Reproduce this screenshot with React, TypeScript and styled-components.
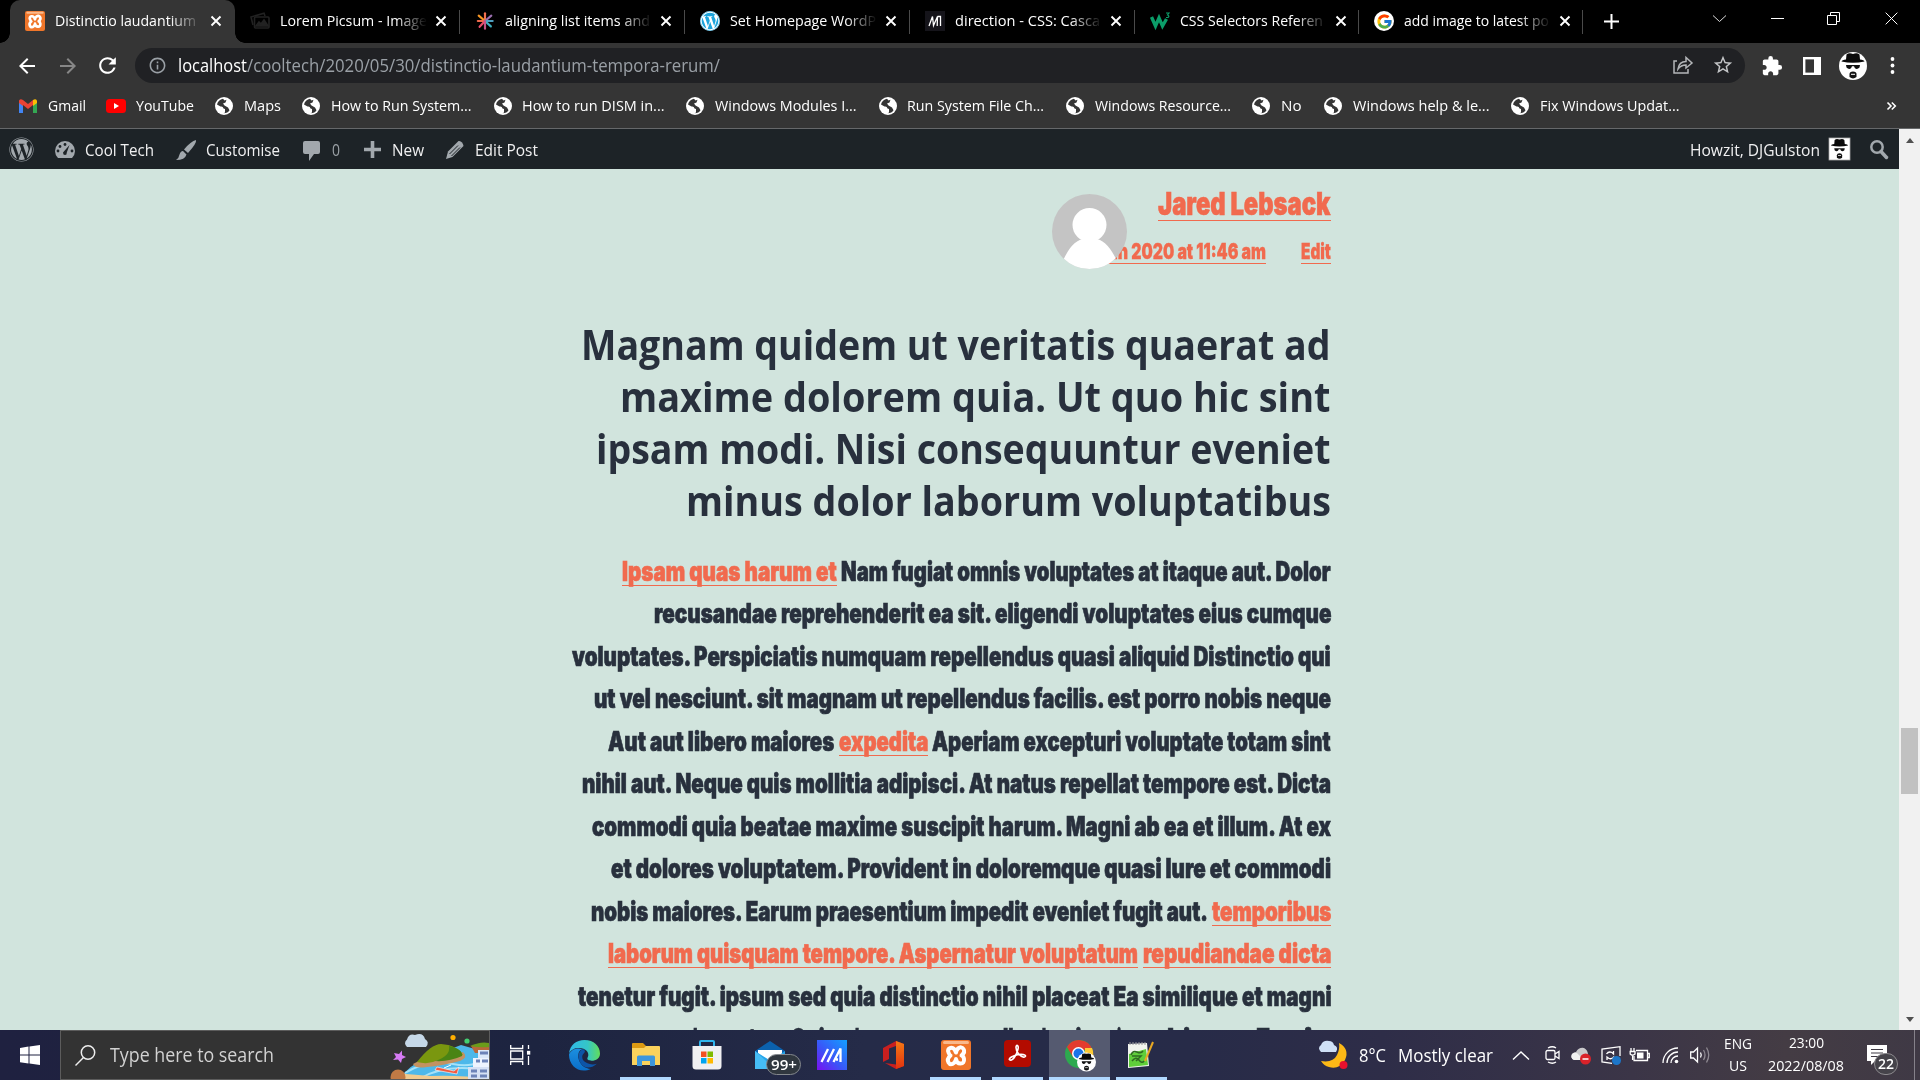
import React, { useLayoutEffect, useRef } from "react";
import styled, { createGlobalStyle, css } from "styled-components";
import { FaWordpress } from "react-icons/fa";
import { MdExtension, MdStarBorder, MdRefresh, MdArrowBack, MdArrowForward, MdInfoOutline } from "react-icons/md";
import { FcGoogle } from "react-icons/fc";

const UI = `"Segoe UI", "Open Sans", "Noto Sans", sans-serif`;
const DISPLAY = `Impact, Inter, "Liberation Sans", sans-serif`;
const ACCENT = "#f16a4e";

const Global = createGlobalStyle`
  * { box-sizing: border-box; }
  body { margin: 0; background: #000; overflow: hidden; font-family: ${UI}; }
  svg { display: block; flex: none; overflow: visible; }
`;

/* ---------- text that condenses to a given width ---------- */
const FitBox = styled.span<{ $w: number }>`
  display: block;
  flex: none;
  width: ${(p) => p.$w}px;
  white-space: pre;
`;
const FitInner = styled.span`
  display: inline-block;
  vertical-align: top;
  transform-origin: 0 50%;
  white-space: pre;
`;
function Fit({ w, children }: { w: number; children: React.ReactNode }) {
  const ref = useRef<HTMLSpanElement>(null);
  useLayoutEffect(() => {
    const el = ref.current;
    if (!el) return;
    el.style.transform = "none";
    const natural = el.getBoundingClientRect().width;
    if (natural > 0) el.style.transform = `scaleX(${w / natural})`;
  }, [w]);
  return (
    <FitBox $w={w}>
      <FitInner ref={ref}>{children}</FitInner>
    </FitBox>
  );
}

/* ---------- shell ---------- */
const Screen = styled.div`
  width: 1920px;
  height: 1080px;
  display: flex;
  flex-direction: column;
  overflow: hidden;
`;
const Item = styled.div<{ $ml?: number; $w?: number; $mt?: number; $pb?: number }>`
  flex: none;
  display: flex;
  align-items: center;
  justify-content: center;
  margin-left: ${(p) => p.$ml ?? 0}px;
  margin-top: ${(p) => p.$mt ?? 0}px;
  padding-bottom: ${(p) => p.$pb ?? 0}px;
  ${(p) => p.$w !== undefined && css`width: ${p.$w}px;`}
`;
const RoundIcon = styled.span`
  display: flex;
  align-items: center;
  justify-content: center;
  width: 20px;
  height: 20px;
  border-radius: 10px;
  background: #fff;
`;

/* ---------- tab strip ---------- */
const TabStrip = styled.div`
  height: 43px;
  flex: none;
  display: flex;
  background: #000;
  color: #fff;
  font-size: 14.5px;
  line-height: 20px;
`;
const Tab = styled.div<{ $active?: boolean; $sep?: boolean; $w: number }>`
  position: relative;
  width: ${(p) => p.$w}px;
  height: 43px;
  flex: none;
  display: flex;
  align-items: center;
  padding: 0 0 1px 15px;
  background: ${(p) => (p.$active ? "#353535" : "transparent")};
  border-radius: 10px 10px 0 0;
  ${(p) =>
    p.$active &&
    css`
      &::before, &::after {
        content: "";
        position: absolute;
        bottom: 0;
        width: 10px;
        height: 10px;
      }
      &::before { left: -10px; background: radial-gradient(circle at 0 0, transparent 9.5px, #353535 10px); }
      &::after { right: -10px; background: radial-gradient(circle at 100% 0, transparent 9.5px, #353535 10px); }
    `}
  ${(p) =>
    p.$sep &&
    css`
      &::after {
        content: "";
        position: absolute;
        right: 0;
        top: 10px;
        width: 1px;
        height: 24px;
        background: #4a4a4a;
      }
    `}
`;
const TabTitle = styled.div`
  width: 147px;
  margin-left: 10px;
  overflow: hidden;
  mask-image: linear-gradient(90deg, #000 115px, transparent 147px);
`;
const CloseX = styled.div`
  margin-left: 9px;
`;
const WindowButtons = styled.div`
  display: flex;
  height: 37px;
  align-items: center;
  margin-left: 81px;
  gap: 42px;
`;

/* ---------- toolbar ---------- */
const Toolbar = styled.div`
  height: 45px;
  flex: none;
  display: flex;
  align-items: center;
  background: #353535;
  color: #fff;
`;
const Omnibox = styled.div`
  width: 1610px;
  height: 35px;
  margin-left: 15px;
  border-radius: 18px;
  background: #202124;
  display: flex;
  align-items: center;
  padding-bottom: 1px;
  font-size: 17.5px;
  line-height: 24px;
  color: #9aa0a6;
`;
const Host = styled.div`
  color: #fff;
  margin-left: 12px;
`;

/* ---------- bookmarks ---------- */
const Bookmarks = styled.div`
  height: 41px;
  flex: none;
  display: flex;
  align-items: center;
  padding-bottom: 5px;
  background: #353535;
  border-bottom: 1px solid #66686a;
  color: #fff;
  font-size: 14.5px;
  line-height: 20px;
`;

/* ---------- page ---------- */
const Viewport = styled.div`
  height: 901px;
  flex: none;
  display: flex;
  overflow: hidden;
`;
const Page = styled.div`
  width: 1899px;
  height: 901px;
  background: #d1e4dd;
  overflow: hidden;
`;
const AdminBar = styled.div`
  height: 40px;
  display: flex;
  align-items: center;
  padding-top: 1px;
  background: #1d2327;
  color: #f0f0f1;
  font-size: 15.5px;
  line-height: 22px;
`;
const Dim = styled.div`
  color: #9ca2a7;
`;
const Grow = styled.div`
  flex: 1;
`;
const Article = styled.article`
  width: 760.5px;
  margin-left: 570px;
  color: #28303d;
`;
const AuthorRow = styled.header`
  height: 149px;
  display: flex;
  justify-content: flex-end;
  align-items: flex-start;
  font-family: ${DISPLAY};
  font-weight: 900;
  color: ${ACCENT};
`;
const AvatarCircle = styled.div`
  position: relative;
  z-index: 1;
  width: 75px;
  height: 75px;
  margin: 25px -29px 0 0;
  border-radius: 50%;
  overflow: hidden;
`;
const AuthorMeta = styled.div`
  display: flex;
  flex-direction: column;
  align-items: flex-end;
  padding-top: 15px;
`;
const AuthorName = styled.a`
  height: 37px;
  font-size: 32px;
  line-height: 40px;
  border-bottom: 1px solid ${ACCENT};
  -webkit-text-stroke: 0.6px currentColor;
`;
const MetaLinks = styled.div`
  display: flex;
  gap: 35px;
  margin-top: 17px;
`;
const MetaLink = styled.a`
  height: 26px;
  font-size: 21.5px;
  line-height: 26px;
  border-bottom: 1px solid ${ACCENT};
  -webkit-text-stroke: 0.3px currentColor;
`;
const Heading = styled.h3`
  margin: 0;
  font-size: 41px;
  line-height: 52px;
  font-weight: 700;
  font-family: ${UI};
`;
const HeadingLine = styled.div`
  display: flex;
  justify-content: flex-end;
`;
const Paragraph = styled.div`
  padding-top: 29.5px;
  font-family: ${DISPLAY};
  font-weight: 900;
  font-size: 26.8px;
  line-height: 30px;
  -webkit-text-stroke: 0.7px currentColor;
`;
const Line = styled.div`
  height: 42.5px;
  display: flex;
  align-items: flex-start;
`;
const Run = styled.span<{ $link?: boolean; $ml: number }>`
  flex: none;
  height: 30px;
  margin-left: ${(p) => p.$ml}px;
  ${(p) =>
    p.$link &&
    css`
      color: ${ACCENT};
      border-bottom: 1px solid ${ACCENT};
    `}
`;
const Scrollbar = styled.div`
  width: 21px;
  background: #f1f1f1;
  display: flex;
  flex-direction: column;
  align-items: center;
  padding: 9px 0 8px;
`;
const Thumb = styled.div`
  width: 17px;
  height: 66px;
  margin-top: 585px;
  background: #c1c1c1;
`;
const Arrow = styled.div<{ $down?: boolean }>`
  width: 0;
  height: 0;
  border-left: 4.5px solid transparent;
  border-right: 4.5px solid transparent;
  ${(p) => (p.$down ? "border-top: 5px solid #505050; margin-top: auto;" : "border-bottom: 5px solid #505050;")}
`;

/* ---------- taskbar ---------- */
const Taskbar = styled.footer`
  height: 50px;
  flex: none;
  display: flex;
  align-items: center;
  background: linear-gradient(90deg, #1f2140 0%, #1d2440 28%, #252b48 45%, #272b48 62%, #2e2d48 72%, #3b3547 85%, #443c44 93%, #3f3945 100%);
  color: #fff;
`;
const SearchBox = styled.div`
  width: 430px;
  height: 50px;
  margin-left: 20px;
  padding-left: 14px;
  display: flex;
  align-items: center;
  background: #333;
  border: 1px solid #5c5c5c;
  color: #d2d2d2;
  font-size: 19.5px;
  line-height: 26px;
  overflow: hidden;
`;
const TaskButton = styled.div<{ $w: number; $ml: number; $run?: boolean; $on?: boolean }>`
  position: relative;
  width: ${(p) => p.$w}px;
  height: 50px;
  margin-left: ${(p) => p.$ml}px;
  flex: none;
  display: flex;
  align-items: center;
  justify-content: center;
  background: ${(p) => (p.$on ? "#555a70" : "transparent")};
  ${(p) => p.$run && css`box-shadow: inset 0 -3px 0 #b0d8ff;`}
`;
const MailBadge = styled.div`
  position: absolute;
  left: 11px;
  top: 24px;
  width: 35px;
  height: 21px;
  border-radius: 11px;
  border: 1px solid #85898e;
  background: #30373f;
  display: flex;
  justify-content: center;
  font-size: 15px;
  line-height: 19px;
  font-weight: 600;
`;
const CountBadge = styled.div`
  position: absolute;
  left: 7px;
  top: 23px;
  width: 24px;
  height: 22px;
  border-radius: 12px;
  border: 1px solid #8c8a8e;
  background: #45434a;
  display: flex;
  justify-content: center;
  font-size: 15px;
  line-height: 19px;
  font-weight: 600;
`;
const Weather = styled.div`
  display: flex;
  gap: 12px;
  margin-left: 11px;
  font-size: 18.5px;
  line-height: 26px;
`;
const Stack = styled.div<{ $w: number; $ml: number }>`
  width: ${(p) => p.$w}px;
  margin-left: ${(p) => p.$ml}px;
  display: flex;
  flex-direction: column;
  align-items: center;
  font-size: 14.5px;
  line-height: 20px;
  padding-bottom: 1px;
`;
const ShowDesktop = styled.div`
  width: 1px;
  height: 50px;
  background: #85818a;
  margin-left: auto;
  margin-right: 5px;
`;

/* ---------- drawings ---------- */
const Cross = ({ s, t = 2 }: { s: number; t?: number }) => (
  <svg width={s} height={s} viewBox="0 0 10 10" stroke="#fff" strokeWidth={(t * 10) / s}>
    <path d="M0.5 0.5L9.5 9.5M9.5 0.5L0.5 9.5" />
  </svg>
);
const Hatman = ({ w, h, square }: { w: number; h: number; square?: boolean }) => (
  <svg width={w} height={h} viewBox="0 0 28 28" preserveAspectRatio="none">
    {square ? <rect width="28" height="28" fill="#fff" stroke="#aaa" /> : <ellipse cx="14" cy="14" rx="14" ry="14" fill="#fff" />}
    <path d="M7 7.500L7.500 2.500Q10 .5 14 2Q18 .5 20.500 2.500L21 7.500Q25 8 25.500 9.500Q14 12 2.500 9.500Q3 8 7 7.500Z" fill="#0a0a0a" />
    <path d="M7 13H21L20.500 15.500Q18 18 15.800 16L15 14.300H13L12.200 16Q10 18 7.500 15.500Z" fill="#111" />
    <path d="M10.500 25V22Q10.500 19.500 14 19.500T17.500 22V25Q14 27.800 10.500 25Z" fill="#111" />
    <path d="M12 22.300h4" stroke="#fff" />
  </svg>
);
const Xampp = ({ s }: { s: number }) => (
  <svg width={s} height={s} viewBox="0 0 30 30">
    <rect width="30" height="30" rx="3" fill="#f0762a" />
    <rect x="2" y="1" width="26" height="3" rx="1.500" fill="#f9b98c" />
    <g transform="translate(4.500 6)" fill="none" stroke="#fff" strokeWidth="4" strokeLinejoin="round" strokeLinecap="round">
      <path d="M10.500 6.500Q8.500 1 5 2T3 6.500Q4 9 5 9.500Q1 13 3 16.500T9 16.500Q10.500 14 10.500 13Q11 17.500 15 17.500T18.500 13Q18 10 16 9.500Q20 6 18 3T12.500 2.500Q11 4 10.500 6.500Z" />
    </g>
  </svg>
);
const Globe = () => (
  <svg width="18" height="18" viewBox="0 0 18 18">
    <circle cx="9" cy="9" r="9" fill="#fff" />
    <path d="M8 1.800C5 2.500 2.500 4.500 2 7.500L5.500 9.500Q8 9 8.500 11.500L10 12V15.500L8.500 16.200Q13 16 14.500 13.200L13 10.500L9.500 8.500L8 6.500L10.500 5.500L11.500 2.800L9.500 3.500Z" fill="#353535" />
    <path d="M2 8.500Q2.500 13.500 7 15.800V12.500L4 10.500Z" fill="#fff" />
  </svg>
);
const Gmail = () => (
  <svg width="18" height="14" viewBox="0 0 18 14">
    <path d="M0 2V14H4V5Z" fill="#4285f4" />
    <path d="M18 2V14H14V5Z" fill="#34a853" />
    <path d="M0 1.500Q1.500-.8 4 1L9 5L14 1L14 6L9 10L4 6V7L0 4Z" fill="#ea4335" />
    <path d="M14 1Q16.500-.8 18 1.500V4L14 7Z" fill="#fbbc04" />
  </svg>
);
const YouTube = () => (
  <svg width="20" height="14" viewBox="0 0 20 14">
    <rect width="20" height="14" rx="3.500" fill="#f00" />
    <path d="M8 4V10L13 7Z" fill="#fff" />
  </svg>
);
const Picsum = () => (
  <svg width="20" height="18" viewBox="0 0 20 18" fill="none" stroke="#222" strokeWidth="1.600">
    <path d="M3 13L1 5L14 1.200L15 4" />
    <rect x="4.500" y="5" width="14.500" height="11" rx="1" />
    <path d="M6 14L9 10L11 12L14 8L18 14Z" fill="#222" />
  </svg>
);
const Burst = () => (
  <svg width="18" height="20" viewBox="0 0 20 20" strokeWidth="2.400" strokeLinecap="round">
    <path d="M10 10V1.500" stroke="#f2704f" />
    <path d="M10 10L3 4" stroke="#f79522" />
    <path d="M10 10L17 4" stroke="#9a6fb0" />
    <path d="M10 10H2" stroke="#ef6a4c" />
    <path d="M10 10H18.500" stroke="#4f9fc0" />
    <path d="M10 10L4 16.500" stroke="#ea4e6c" />
    <path d="M10 10L16.500 16" stroke="#3fb0c0" />
    <path d="M10 10V18.500" stroke="#c65285" />
  </svg>
);
const Mdn = () => (
  <svg width="20" height="20" viewBox="0 0 20 20">
    <rect width="20" height="20" fill="#15141a" />
    <path d="M4 15L7.500 5.500L8.500 14.500L12.500 5.500L12.200 15M12.500 5.500H15.500V15" stroke="#fff" strokeWidth="1.300" fill="none" />
  </svg>
);
const Schools = () => (
  <svg width="20" height="18" viewBox="0 0 20 18" fill="none" stroke="#0b9d69">
    <path d="M1.500 5L5.500 14L9 6L12.500 14L16.500 7" strokeWidth="3.400" />
    <path d="M16 1H19L17.500 3Q20 4 18 5.500H16" strokeWidth="1.200" />
  </svg>
);
const Edge = () => (
  <svg width="31" height="31" viewBox="0 0 30 30">
    <defs>
      <linearGradient id="eg" x1="0" x2="1"><stop offset="0" stopColor="#2fb8ea" /><stop offset=".6" stopColor="#35c6c6" /><stop offset="1" stopColor="#62dd5a" /></linearGradient>
      <linearGradient id="eb" x1="0" y1="0" x2="0" y2="1"><stop offset="0" stopColor="#1c8fe0" /><stop offset="1" stopColor="#0a6fc9" /></linearGradient>
    </defs>
    <path d="M0 13C1 5 7 0 15 0C24 0 30 6 30 13C30 18 26 20 22 20C19 20 17 19 18 17C20 14 18 9 12 8C7 7 2 9 0 13Z" fill="url(#eg)" />
    <path d="M0 14C2 9 8 7 13 9C9 10 9 14 9 17C10 24 16 28 21 28C11 33 0 26 0 14Z" fill="url(#eb)" />
    <path d="M13 9C9 11 8 17 11 22C14 27 20 29 27 23C21 25 14 22 13 18C12.500 15 13 14 15 12C16 11 15 9 13 9Z" fill="#0d55a8" />
  </svg>
);
const Explorer = () => (
  <svg width="28" height="24" viewBox="0 0 28 24">
    <path d="M0 1Q0 0 1 0H11L14 3V6H0Z" fill="#dc9a12" />
    <path d="M0 5H12L14 3H27Q28 3 28 4V22H0Z" fill="#fbd25c" />
    <path d="M5 23V14Q5 12.500 6.500 12.500H21.500Q23 12.500 23 14V23H18V18H10V23Z" fill="#3d96dc" />
  </svg>
);
const Store = () => (
  <svg width="30" height="30" viewBox="0 0 30 30">
    <path d="M8 7V2Q8 1 9 1H21Q22 1 22 2V7" stroke="#30b6ee" strokeWidth="2" fill="none" />
    <path d="M.5 6H29.500V26Q29.500 29.500 26 29.500H4Q.5 29.500 .5 26Z" fill="#f0f0f2" />
    <rect x="9" y="11.500" width="5.500" height="5.500" fill="#f25022" /><rect x="15.500" y="11.500" width="5.500" height="5.500" fill="#7fba00" />
    <rect x="9" y="18" width="5.500" height="5.500" fill="#00a4ef" /><rect x="15.500" y="18" width="5.500" height="5.500" fill="#ffb900" />
  </svg>
);
const Mail = () => (
  <svg width="30" height="28" viewBox="0 0 30 28">
    <path d="M0 10L15 0L30 10V14H0Z" fill="#0b61ad" />
    <path d="M3 9H27V20H3Z" fill="#fff" />
    <path d="M0 10L16 20L30 10V28H0Z" fill="#27a5ea" />
    <path d="M0 10L20 28H0Z" fill="#46bdf5" />
  </svg>
);
const MyAsus = () => (
  <svg width="30" height="30" viewBox="0 0 30 30">
    <defs><linearGradient id="ma" x1="1" y1="0" x2="0" y2="1"><stop offset="0" stopColor="#12a0ff" /><stop offset=".55" stopColor="#3a56f8" /><stop offset="1" stopColor="#7a10f0" /></linearGradient></defs>
    <rect width="30" height="30" fill="url(#ma)" />
    <path d="M4.500 22L11 9M10.500 22L17 9M16.500 22L23.500 8.500V22M19 19.500H21" stroke="#fff" strokeWidth="2.300" fill="none" />
  </svg>
);
const Office = () => (
  <svg width="23" height="28" viewBox="0 0 23 28">
    <defs><linearGradient id="of" x1="0" y1="0" x2="0" y2="1"><stop offset="0" stopColor="#f47a14" /><stop offset="1" stopColor="#e3320f" /></linearGradient></defs>
    <path d="M1 7L14 0L22 3V25L14 28L3 22L14 23.500V5L7 7.500V18L1 21Z" fill="#c91f1f" />
    <path d="M14 0L22 3V25L14 28Z" fill="url(#of)" />
  </svg>
);
const Acrobat = () => (
  <svg width="27" height="27" viewBox="0 0 27 27">
    <rect width="27" height="27" rx="4" fill="#b30b00" />
    <path d="M6 20C3 19 10 15 15 14.500C21 14 23 16 20.500 17C17 18 12 12 12 7.500C12 4 15 5 14 9C13 14 9 21 6 20Z" fill="none" stroke="#fff" strokeWidth="1.600" />
  </svg>
);
const Chrome = () => (
  <svg width="31" height="31" viewBox="0 0 31 31">
    <circle cx="14" cy="14" r="14" fill="#2da94f" />
    <path d="M2 7A14 14 0 0 1 27.500 10H14L8 17Z" fill="#e33b2e" />
    <path d="M14 28L20 17V8H27A14 14 0 0 1 14 28Z" fill="#fcc934" />
    <circle cx="13.500" cy="13.500" r="6.500" fill="#fff" /><circle cx="13.500" cy="13.500" r="5" fill="#1a73e8" />
    <g transform="translate(12 12.500)"><Hatman w={19} h={19} /></g>
  </svg>
);
const Notepad = () => (
  <svg width="28" height="28" viewBox="0 0 28 28">
    <path d="M1 3L20 2L22 25L1 27Z" fill="#f2f5ee" />
    <path d="M2 13L19 8L21 24L2 26Z" fill="#5fce3a" />
    <path d="M3 4V1M6 4V1M9 4V1M12 4V1M15 4V1M18 4V1" stroke="#999" />
    <path d="M4 14Q6 9 10 11T16 10M5 20Q9 15 12 19T17 20M5 15H14L9 20" stroke="#2f6a22" strokeWidth="1.500" fill="none" />
    <path d="M26 1L18 20" stroke="#e8a823" strokeWidth="2" />
  </svg>
);
const Island = () => (
  <svg width="98" height="48" viewBox="0 0 98 48">
    <path d="M8 48Q20 33 34 28L70 14L98 22V48Z" fill="#4db8ea" />
    <path d="M14 42Q36 28 62 33T97 22M28 48Q52 34 85 38" stroke="#a5e2f8" strokeWidth="2" fill="none" />
    <path d="M0 48Q5 39 15 43L40 45Q70 44 98 48H0Z" fill="#f1cb8f" />
    <path d="M22 33Q30 28 44 28Q62 26 72 21Q78 26 69 30Q50 35 36 36Q24 38 22 33Z" fill="#c39261" />
    <path d="M26 31Q40 13 50 13Q66 14 72 24Q56 30 47 29Q38 34 26 31Z" fill="#7a970f" />
    <path d="M44 30Q60 25 58 15Q72 18 71 25Q58 31 44 30Z" fill="#4a8414" />
    <path d="M80 15Q90 11 98 13V22H84Z" fill="#b9683a" /><path d="M79 15Q90 10 98 12V16Q88 17 79 15Z" fill="#6b9c1a" />
    <path d="M44 39L66 43L68 36L63 40L46 36Z" fill="#f2593e" stroke="#fff" strokeWidth=".6" /><path d="M53 37L60 34" stroke="#fff" />
    <rect x="87" y="19" width="11" height="12" fill="#dce9fa" /><rect x="82" y="27" width="16" height="10" fill="#eef4fe" /><rect x="77" y="36" width="21" height="12" fill="#d6e1f4" />
    <path d="M89 22h8M85 30h4M91 30h6M80 40h6M89 40h7M80 45h6M89 45h7" stroke="#6d83b8" strokeWidth="3" />
    <circle cx="7" cy="46" r="7.500" fill="#c17a45" />
    <path d="M16 16Q12 12 16 8.500Q18 2 24 4Q32 1 34 8Q39 11 35 16Z" fill="#c6d8e8" />
    <circle cx="62" cy="6.500" r="2.600" fill="#ffae00" /><circle cx="76" cy="10" r="2.600" fill="#43cf70" />
    <path d="M3 22L8 23L11 19.500L11 24L15 26L11 28L10 32L7 28.500L2 29L5 26Z" fill="#d77bf5" />
  </svg>
);
const Moon = () => (
  <svg width="30" height="30" viewBox="0 0 30 30">
    <path d="M20 3Q31 9 26 20Q20 30 10 27Q5 26 2 21Q14 23 18 15Q21 9 20 3Z" fill="#fcb916" />
    <path d="M2 12Q-2 8 2 5Q4 0 10 1Q14 1 15 5Q20 7 17 12Z" fill="#cfe0f6" />
    <circle cx="24.500" cy="25" r="4" fill="#e8112d" />
  </svg>
);

const tabs: { icon: React.ReactNode; text: string; w: number }[] = [
  { icon: <Xampp s={20} />, text: "Distinctio laudantium", w: 141 },
  { icon: <Picsum />, text: "Lorem Picsum - Image", w: 147 },
  { icon: <Burst />, text: "aligning list items and", w: 145 },
  { icon: <RoundIcon><FaWordpress size={20} color="#1ca4dc" /></RoundIcon>, text: "Set Homepage WordP", w: 146 },
  { icon: <Mdn />, text: "direction - CSS: Casca", w: 145 },
  { icon: <Schools />, text: "CSS Selectors Referen", w: 143 },
  { icon: <RoundIcon><FcGoogle size={17} /></RoundIcon>, text: "add image to latest po", w: 145 },
];

const marks: { icon: React.ReactNode; c: number; x: number; e: number; text: string }[] = [
  { icon: <Gmail />, c: 28, x: 47.5, e: 85.5, text: "Gmail" },
  { icon: <YouTube />, c: 116, x: 136, e: 194, text: "YouTube" },
  { icon: <Globe />, c: 224, x: 243.5, e: 280.5, text: "Maps" },
  { icon: <Globe />, c: 311, x: 331, e: 471.5, text: "How to Run System..." },
  { icon: <Globe />, c: 503, x: 522, e: 664.5, text: "How to run DISM in..." },
  { icon: <Globe />, c: 695, x: 715, e: 856.5, text: "Windows Modules I..." },
  { icon: <Globe />, c: 888, x: 907, e: 1044, text: "Run System File Ch..." },
  { icon: <Globe />, c: 1075, x: 1095, e: 1231, text: "Windows Resource..." },
  { icon: <Globe />, c: 1261, x: 1281, e: 1301.5, text: "No" },
  { icon: <Globe />, c: 1333, x: 1352.5, e: 1489, text: "Windows help & le..." },
  { icon: <Globe />, c: 1520, x: 1539.5, e: 1679, text: "Fix Windows Updat..." },
];

type R = [number, number, string, boolean?];
const lines: R[][] = [
  [[622.2, 837, "Ipsam quas harum et", true], [841.5, 1331, "Nam fugiat omnis voluptates at itaque aut. Dolor"]],
  [[653.5, 1331, "recusandae reprehenderit ea sit. eligendi voluptates eius cumque"]],
  [[572.3, 1331, "voluptates. Perspiciatis numquam repellendus quasi aliquid Distinctio qui"]],
  [[594, 1331, "ut vel nesciunt. sit magnam ut repellendus facilis. est porro nobis neque"]],
  [[607.7, 834, "Aut aut libero maiores"], [838.6, 928, "expedita", true], [932.5, 1331, "Aperiam excepturi voluptate totam sint"]],
  [[582, 1331, "nihil aut. Neque quis mollitia adipisci. At natus repellat tempore est. Dicta"]],
  [[592, 1331, "commodi quia beatae maxime suscipit harum. Magni ab ea et illum. At ex"]],
  [[611, 1331, "et dolores voluptatem. Provident in doloremque quasi Iure et commodi"]],
  [[590.6, 1207.5, "nobis maiores. Earum praesentium impedit eveniet fugit aut."], [1211.6, 1331, "temporibus", true]],
  [[608, 1138, "laborum quisquam tempore. Aspernatur voluptatum", true], [1142.6, 1331, "repudiandae dicta", true]],
  [[577.5, 1331, "tenetur fugit. ipsum sed quia distinctio nihil placeat Ea similique et magni"]],
  [[688, 785, "deserunt eos"], [791, 836, "Quia"], [855, 975, "lorem a eos quae"], [980, 1024, "nulla"], [1028, 1046, "ad"], [1050, 1093, "quia"], [1117, 1160, "ipsam"], [1167, 1205, "hic"], [1256, 1298, "Eos"], [1304, 1331, "in"]],
];
const heads: [number, string][] = [
  [581.5, "Magnam quidem ut veritatis quaerat ad"],
  [620.5, "maxime dolorem quia. Ut quo hic sint"],
  [596.5, "ipsam modi. Nisi consequuntur eveniet"],
  [686, "minus dolor laborum voluptatibus"],
];

export default function App() {
  return (
    <Screen>
      <Global />
      <TabStrip>
        <Item $w={10} />
        {tabs.map((t, i) => (
          <Tab key={t.text} $active={i === 0} $sep={i > 0} $w={i === 0 ? 225 : i > 4 ? 224 : 225}>
            <Item $w={20}>{t.icon}</Item>
            <TabTitle><Fit w={t.w}>{t.text}</Fit></TabTitle>
            <CloseX><Cross s={10} t={1.9} /></CloseX>
          </Tab>
        ))}
        <Item $ml={20} $w={16}>
          <svg width="15" height="15" viewBox="0 0 15 15" stroke="#fff" strokeWidth="2"><path d="M7.500 0V15M0 7.500H15" /></svg>
        </Item>
        <WindowButtons>
          <Item $w={15} $ml={12}><svg width="13" height="7" viewBox="0 0 13 7" fill="none" stroke="#ddd"><path d="M0 .5L6.500 6.500L13 .5" /></svg></Item>
          <Item $w={14} $ml={1}><svg width="13" height="1" viewBox="0 0 13 1"><rect width="13" height="1" fill="#fff" /></svg></Item>
          <Item $w={15}><svg width="13" height="13" viewBox="0 0 13 13" fill="none" stroke="#fff"><path d="M.5 3.500H9.500V12.500H.5ZM3.500 3V.5H12.500V9.500H10" /></svg></Item>
          <Item $w={15} $ml={1}><Cross s={13} t={1} /></Item>
        </WindowButtons>
      </TabStrip>

      <Toolbar>
        <Item $ml={15} $w={24}><MdArrowBack size={24} /></Item>
        <Item $ml={17} $w={24}><MdArrowForward size={24} color="#878787" /></Item>
        <Item $ml={15} $w={24}><MdRefresh size={25} /></Item>
        <Item $w={1} />
        <Omnibox>
          <Item $ml={13} $w={18}><MdInfoOutline size={19} /></Item>
          <Host><Fit w={69}>localhost</Fit></Host>
          <Fit w={473}>/cooltech/2020/05/30/distinctio-laudantium-tempora-rerum/</Fit>
          <Grow />
          <Item $w={20}>
            <svg width="20" height="18" viewBox="0 0 20 18" fill="none" stroke="#b4b6b9" strokeWidth="1.500">
              <path d="M4 5H1V17H15V13" /><path d="M5 13Q6 5.500 13 5.500V1.500L19 7L13 12V9Q8 9 5 13Z" />
            </svg>
          </Item>
          <Item $ml={19} $w={22}><MdStarBorder size={22} color="#c4c6c8" /></Item>
          <Item $w={11} />
        </Omnibox>
        <Item $ml={16} $w={22}><MdExtension size={22} /></Item>
        <Item $ml={20} $w={18}>
          <svg width="18" height="18" viewBox="0 0 18 18"><rect x="1.200" y="1.200" width="15.600" height="15.600" fill="none" stroke="#fff" strokeWidth="2.400" /><rect x="11" width="7" height="18" fill="#fff" /></svg>
        </Item>
        <Item $ml={18} $w={28}><Hatman w={28} h={28} /></Item>
        <Item $ml={23} $w={5}>
          <svg width="5" height="17" viewBox="0 0 5 17" fill="#fff"><circle cx="2.500" cy="2" r="1.900" /><circle cx="2.500" cy="8.500" r="1.900" /><circle cx="2.500" cy="15" r="1.900" /></svg>
        </Item>
      </Toolbar>

      <Bookmarks>
        {marks.map((m, i) => (
          <React.Fragment key={m.text}>
            <Item $ml={m.c - 10 - (i ? marks[i - 1].e : 0)} $w={20}>{m.icon}</Item>
            <Item $ml={m.x - m.c - 10}><Fit w={m.e - m.x}>{m.text}</Fit></Item>
          </React.Fragment>
        ))}
        <Item $ml={208}>
          <svg width="9" height="8" viewBox="0 0 9 8" fill="none" stroke="#fff" strokeWidth="1.600"><path d="M.5 .5L4 4L.5 7.500M4.800 .5L8.300 4L4.800 7.500" /></svg>
        </Item>
      </Bookmarks>

      <Viewport>
        <Page>
          <AdminBar>
            <Item $ml={8} $w={26}><FaWordpress size={25} color="#a2a8ad" /></Item>
            <Item $ml={21} $w={20}>
              <svg width="20" height="17" viewBox="0 0 20 17">
                <path d="M3 17Q0 14 0 10A10 10 0 0 1 20 10Q20 14 17 17Z" fill="#a2a8ad" />
                <g fill="#1d2327"><circle cx="10" cy="3.500" r="1.400" /><circle cx="5" cy="5.500" r="1.400" /><circle cx="3" cy="10" r="1.400" /><circle cx="17" cy="10" r="1.400" /><path d="M14.500 4L11.800 11.500Q12 14 10 14T8 11.500Z" /></g>
              </svg>
            </Item>
            <Item $ml={10} $mt={1}><Fit w={69}>Cool Tech</Fit></Item>
            <Item $ml={22} $w={20}>
              <svg width="20" height="20" viewBox="0 0 20 20" fill="#a2a8ad"><path d="M20 0Q21 3 12 13L8 9.500Q15 1 20 0Z" /><path d="M7 11L10.500 14.500Q9 20 0 20Q3 18 3.500 14.500Q4.500 11 7 11Z" /></svg>
            </Item>
            <Item $ml={10} $mt={1}><Fit w={74}>Customise</Fit></Item>
            <Item $ml={22} $w={18} $mt={2}>
              <svg width="17" height="20" viewBox="0 0 17 20" fill="#a2a8ad"><path d="M2 0H15Q17 0 17 2V11Q17 13 15 13H11L6 20V13H2Q0 13 0 11V2Q0 0 2 0Z" /></svg>
            </Item>
            <Item $ml={12} $mt={1}><Dim><Fit w={8}>0</Fit></Dim></Item>
            <Item $ml={24} $w={16}><svg width="17" height="17" viewBox="0 0 17 17" stroke="#a2a8ad" strokeWidth="3.600"><path d="M8.500 0V17M0 8.500H17" /></svg></Item>
            <Item $ml={12} $mt={1}><Fit w={32}>New</Fit></Item>
            <Item $ml={22} $w={18}>
              <svg width="18" height="18" viewBox="0 0 18 18"><path d="M12.500 0Q14.500-.5 16 1.500T17.500 5L6.500 16L0 18L2 10.500Z" fill="#a2a8ad" /><path d="M3.500 13L12 4.500M5.500 15L14 6.500" stroke="#1d2327" /></svg>
            </Item>
            <Item $ml={11} $mt={1}><Fit w={63}>Edit Post</Fit></Item>
            <Grow />
            <Item $mt={1}><Fit w={130}>Howzit, DJGulston</Fit></Item>
            <Item $ml={8} $w={22} $mt={-1}><Hatman w={21} h={22} square /></Item>
            <Item $ml={20} $w={18} $mt={-1}>
              <svg width="18" height="19" viewBox="0 0 18 19" fill="none" stroke="#a2a8ad"><circle cx="7" cy="7" r="5.700" strokeWidth="2.500" /><path d="M11 11.500L16.500 17.500" strokeWidth="3.500" strokeLinecap="round" /></svg>
            </Item>
            <Item $w={11} />
          </AdminBar>

          <Article>
            <AuthorRow>
              <AvatarCircle>
                <svg width="75" height="75" viewBox="0 0 75 75"><rect width="75" height="75" fill="#c4c4c4" /><circle cx="37.500" cy="31" r="17" fill="#fff" /><path d="M10 69Q20 45 33 45H43Q55 45 66 69V75H10Z" fill="#fff" /></svg>
              </AvatarCircle>
              <AuthorMeta>
                <AuthorName><Fit w={172.5}>Jared Lebsack</Fit></AuthorName>
                <MetaLinks>
                  <MetaLink><Fit w={168}>Jun 2020 at 11:46 am</Fit></MetaLink>
                  <MetaLink><Fit w={30}>Edit</Fit></MetaLink>
                </MetaLinks>
              </AuthorMeta>
            </AuthorRow>
            <Heading>
              {heads.map(([x, t]) => (
                <HeadingLine key={t}><Fit w={1331 - x}>{t}</Fit></HeadingLine>
              ))}
            </Heading>
            <Paragraph>
              {lines.map((l, i) => (
                <Line key={i}>
                  {l.map(([x, e, t, link], j) => (
                    <Run key={t} $link={link} $ml={x - (j ? l[j - 1][1] : 570)}><Fit w={e - x}>{t}</Fit></Run>
                  ))}
                </Line>
              ))}
            </Paragraph>
          </Article>
        </Page>
        <Scrollbar>
          <Arrow />
          <Thumb />
          <Arrow $down />
        </Scrollbar>
      </Viewport>

      <Taskbar>
        <Item $ml={20} $w={20}>
          <svg width="20" height="20" viewBox="0 0 20 20" fill="#fff"><path d="M0 3L8.500 1.600V9.500H0ZM9.500 1.400L20 0V9.500H9.500ZM0 10.500H8.500V18.400L0 17.200ZM9.500 10.500H20V20L9.500 18.600Z" /></svg>
        </Item>
        <SearchBox>
          <svg width="21" height="21" viewBox="0 0 21 21" fill="none" stroke="#eee" strokeWidth="1.500"><circle cx="13" cy="7.500" r="6.700" /><path d="M8.500 12.500L.5 20.500" /></svg>
          <Item $ml={14}><Fit w={164}>Type here to search</Fit></Item>
          <Grow />
          <Island />
        </SearchBox>
        <Item $ml={20} $w={20}>
          <svg width="20" height="20" viewBox="0 0 20 20" fill="none" stroke="#fff" strokeWidth="1.300"><path d="M.7 0V3.500H12.700V0M.7 20V16.500H12.700V20M.7 6H12.700V14H.7ZM18.500 0V4M18.500 11V20" /><rect x="17.600" y="6.500" width="2" height="2.500" fill="#fff" /></svg>
        </Item>
        <TaskButton $ml={29} $w={50}><Edge /></TaskButton>
        <TaskButton $ml={11} $w={51} $run><Explorer /></TaskButton>
        <TaskButton $ml={11} $w={50}><Store /></TaskButton>
        <TaskButton $ml={23} $w={30}><Mail /><MailBadge><Fit w={26}>99+</Fit></MailBadge></TaskButton>
        <TaskButton $ml={32} $w={30}><MyAsus /></TaskButton>
        <TaskButton $ml={31} $w={30}><Office /></TaskButton>
        <TaskButton $ml={22} $w={51} $run><Xampp s={30} /></TaskButton>
        <TaskButton $ml={11} $w={51} $run><Item $mt={-3}><Acrobat /></Item></TaskButton>
        <TaskButton $ml={6} $w={61} $run $on><Item $ml={1}><Chrome /></Item></TaskButton>
        <TaskButton $ml={6} $w={51} $run><Item $ml={-2}><Notepad /></Item></TaskButton>
        <Item $ml={152} $w={29}><Moon /></Item>
        <Weather><Fit w={27}>8°C</Fit><Fit w={95}>Mostly clear</Fit></Weather>
        <Item $ml={20} $w={16}><svg width="16" height="9" viewBox="0 0 16 9" fill="none" stroke="#fff" strokeWidth="1.400"><path d="M0 8.500L8 1L16 8.500" /></svg></Item>
        <Item $ml={16} $w={15}>
          <svg width="15" height="18" viewBox="0 0 15 18" fill="none" stroke="#fff" strokeWidth="1.300"><rect x="1" y="4.500" width="9" height="9" rx="1.500" /><path d="M10 8L14 5.500V12.500L10 10M3 2Q7.500-.5 11 2M3 16Q7.500 18.500 11 16" /></svg>
        </Item>
        <Item $ml={11} $w={20}>
          <svg width="20" height="17" viewBox="0 0 20 17"><path d="M3 13Q-1 11 1 7Q3 5 5 5Q8 0 13 1Q17 3 17 8L15 13Z" fill="#c9c9cb" /><path d="M3 13Q-1 11 1 7Q5 4 8 8L13 13Z" fill="#f1f1f1" /><circle cx="14.500" cy="12" r="5.500" fill="#d9222a" /><path d="M11.500 12H17.500" stroke="#fff" strokeWidth="1.500" /></svg>
        </Item>
        <Item $ml={10} $w={20}>
          <svg width="20" height="19" viewBox="0 0 20 19" fill="none" stroke="#fff" strokeWidth="1.300"><path d="M19 10V.7L1 3V16L11 17.300" /><path d="M5.500 8Q7.500 5 11 6.500L12.500 8V5M13 10.500Q11 13.500 8 12.500L6 11V14" /><circle cx="15.500" cy="14.500" r="4.500" fill="#1d76c9" stroke="none" /></svg>
        </Item>
        <Item $ml={9} $w={20}>
          <svg width="20" height="14" viewBox="0 0 20 14" fill="none" stroke="#fff" strokeWidth="1.300"><path d="M6 2.500H17.500V12.500H4V8M17.500 5.500H19.300V9.500H17.500" /><path d="M1 0V3M4 0V3M.2 3.500H5V6Q2.500 8.500 .2 6ZM2.600 8V12" /><rect x="7" y="4.500" width="6.500" height="6" fill="#fff" stroke="none" /></svg>
        </Item>
        <Item $ml={12} $w={17}>
          <svg width="17" height="17" viewBox="0 0 17 17" fill="none" stroke="#fff" strokeWidth="1.300"><path d="M1 16A15 15 0 0 1 16 1M5 16A11 11 0 0 1 16 5M9 16A7 7 0 0 1 16 9" /><circle cx="14.500" cy="14.500" r="1.800" fill="#fff" stroke="none" /></svg>
        </Item>
        <Item $ml={11} $w={20}>
          <svg width="20" height="18" viewBox="0 0 20 18" fill="none" stroke="#fff" strokeWidth="1.300"><path d="M.7 6H3.500L7.500 2V16L3.500 12H.7Z" /><path d="M10.500 6.500Q12 9 10.500 11.500" /><path d="M13.500 4Q16.500 9 13.500 14M16.500 1.500Q21 9 16.500 16.500" stroke="#8e8991" /></svg>
        </Item>
        <Stack $ml={13} $w={30}><Item $pb={2}><Fit w={28}>ENG</Fit></Item><Fit w={18}>US</Fit></Stack>
        <Stack $ml={15} $w={76}><Item $pb={3}><Fit w={35}>23:00</Fit></Item><Fit w={76}>2022/08/08</Fit></Stack>
        <TaskButton $ml={23} $w={20}>
          <Item $mt={-1}><svg width="20" height="20" viewBox="0 0 20 20"><path d="M0 0H20V16H8L4 20V16H0Z" fill="#fff" /><path d="M4 4.500H16M4 8H16M4 11.500H12" stroke="#3f3a44" strokeWidth="1.200" /></svg></Item>
          <CountBadge><Fit w={16}>22</Fit></CountBadge>
        </TaskButton>
        <ShowDesktop />
      </Taskbar>
    </Screen>
  );
}
